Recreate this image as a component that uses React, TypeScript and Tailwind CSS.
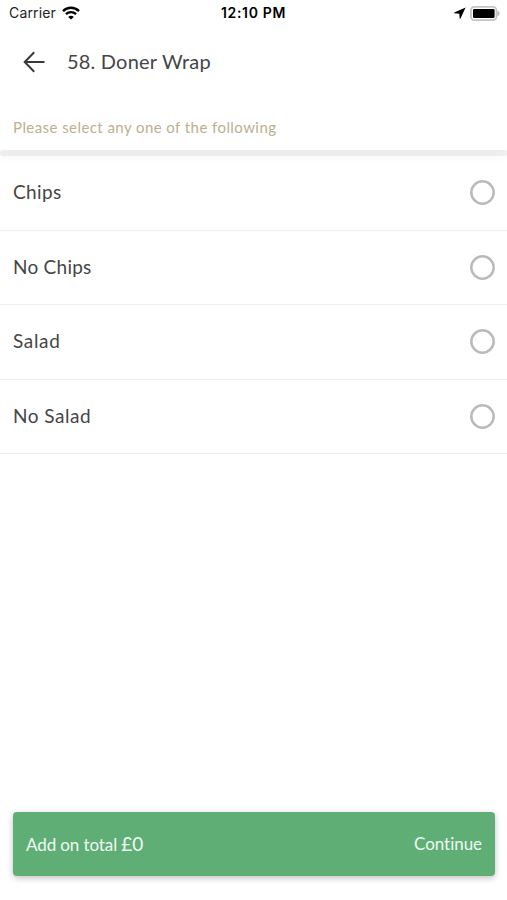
import { useState } from "react";

const OPTIONS = [
  { id: "chips", label: "Chips", spacing: "tracking-[0.35px]" },
  { id: "no-chips", label: "No Chips", spacing: "tracking-[0.25px]" },
  { id: "salad", label: "Salad", spacing: "tracking-[0.65px]" },
  { id: "no-salad", label: "No Salad", spacing: "tracking-[0.5px]" },
];

function WifiIcon() {
  return (
    <svg width="18" height="14" viewBox="0 0 18 14" fill="none" stroke="#000" strokeWidth="2.3">
      <path d="M1 5.1C5.5 .6 12.5 .6 17 5.1" />
      <path d="M3.9 8.2c2.9-2.8 7.3-2.8 10.2 0" />
      <path d="M9 13.6 6.2 10.9c1.5-1.5 4.1-1.5 5.6 0Z" fill="#000" stroke="none" />
    </svg>
  );
}

function LocationIcon() {
  return (
    <svg width="12" height="12" viewBox="0 0 12 12" fill="#000">
      <path d="M11.6.4.3 5.400c-.4.2-.3.7.1.8l4.900.5.4 4.800c.1.4.6.5.8.1Z" />
    </svg>
  );
}

function BatteryIcon() {
  return (
    <svg width="30" height="15" viewBox="0 0 30 15" fill="none">
      <rect x=".9" y=".9" width="25.600" height="13.200" rx="3.600" stroke="#c4c4c4" strokeWidth="1.800" />
      <rect x="3" y="3" width="21.600" height="9" rx="1.200" fill="#000" />
      <path d="M27.400 4.500v6c1.200-.5 2.200-1.700 2.200-3s-1-2.500-2.200-3Z" fill="#bdbdbd" />
    </svg>
  );
}

function BackIcon() {
  return (
    <svg width="22" height="22" viewBox="0 0 22 22" fill="none" stroke="#393939" strokeWidth="2">
      <path d="M11.200 1.300 1.700 11l9.500 9.700M2 11h19.500" />
    </svg>
  );
}

function RadioIcon({ checked }: { checked: boolean }) {
  return (
    <svg width="25" height="25" viewBox="0 0 25 25" fill="none">
      <circle cx="12.500" cy="12.500" r="11.200" stroke="#bababa" strokeWidth="2.500" />
      {checked && <circle cx="12.500" cy="12.500" r="6" fill="#5eae76" />}
    </svg>
  );
}

export default function App() {
  const [selected, setSelected] = useState<string | null>(null);

  return (
    <div className="flex h-[900px] w-full flex-col overflow-hidden bg-white font-[Lato,sans-serif] text-[#454545]">
      {/* Status bar */}
      <div className="grid h-7 shrink-0 grid-cols-3 items-center px-[7px] pb-[2px] font-[Inter,sans-serif] text-black">
        <div className="flex items-center gap-[6px] pl-[2px]">
          <span className="text-[14px] leading-5 tracking-[0.15px] text-[#222]">Carrier</span>
          <WifiIcon />
        </div>
        <span className="text-center text-[14px] font-semibold leading-5 tracking-[0.65px]">12:10 PM</span>
        <div className="flex items-center justify-end gap-[4px]">
          <LocationIcon />
          <BatteryIcon />
        </div>
      </div>

      {/* Header */}
      <header className="flex h-[68px] shrink-0 items-center gap-[22px] pl-[23px]">
        <button aria-label="Back">
          <BackIcon />
        </button>
        <h1 className="pb-[2px] text-[20px] leading-7 tracking-[0.2px]">58. Doner Wrap</h1>
      </header>

      <div className="flex h-[54px] shrink-0 items-center px-[13px] pt-[7px]">
        <p className="text-[15px] leading-5 tracking-[0.43px] text-[#bbb08f]">
          Please select any one of the following
        </p>
      </div>
      <div className="h-[6px] shrink-0 rounded-full bg-[#eeeeee] shadow-[0_3px_7px_rgba(0,0,0,0.03)]" />

      {/* Options */}
      <div role="radiogroup">
        {OPTIONS.map(option => (
          <button
            key={option.id}
            role="radio"
            aria-checked={selected === option.id}
            className="flex h-[74.6px] w-full items-center justify-between border-b border-[#ececec] pl-[13px] pr-3"
            onClick={() => setSelected(option.id)}
          >
            <span className={`pb-px text-[19px] leading-7 ${option.spacing}`}>{option.label}</span>
            <RadioIcon checked={selected === option.id} />
          </button>
        ))}
      </div>

      {/* Footer action */}
      <button className="mb-6 ml-[13px] mr-3 mt-auto flex h-16 shrink-0 items-center justify-between rounded-[4px] bg-[#5eae76] px-[13px] text-[#f0faf2] shadow-[0_2px_6px_rgba(0,0,0,0.25)]">
        <span className="text-[17px] leading-6 tracking-[-0.1px]">
          Add on total <span className="text-[19px]">£0</span>
        </span>
        <span className="text-[17px] leading-6 tracking-[-0.05px]">Continue</span>
      </button>
    </div>
  );
}
